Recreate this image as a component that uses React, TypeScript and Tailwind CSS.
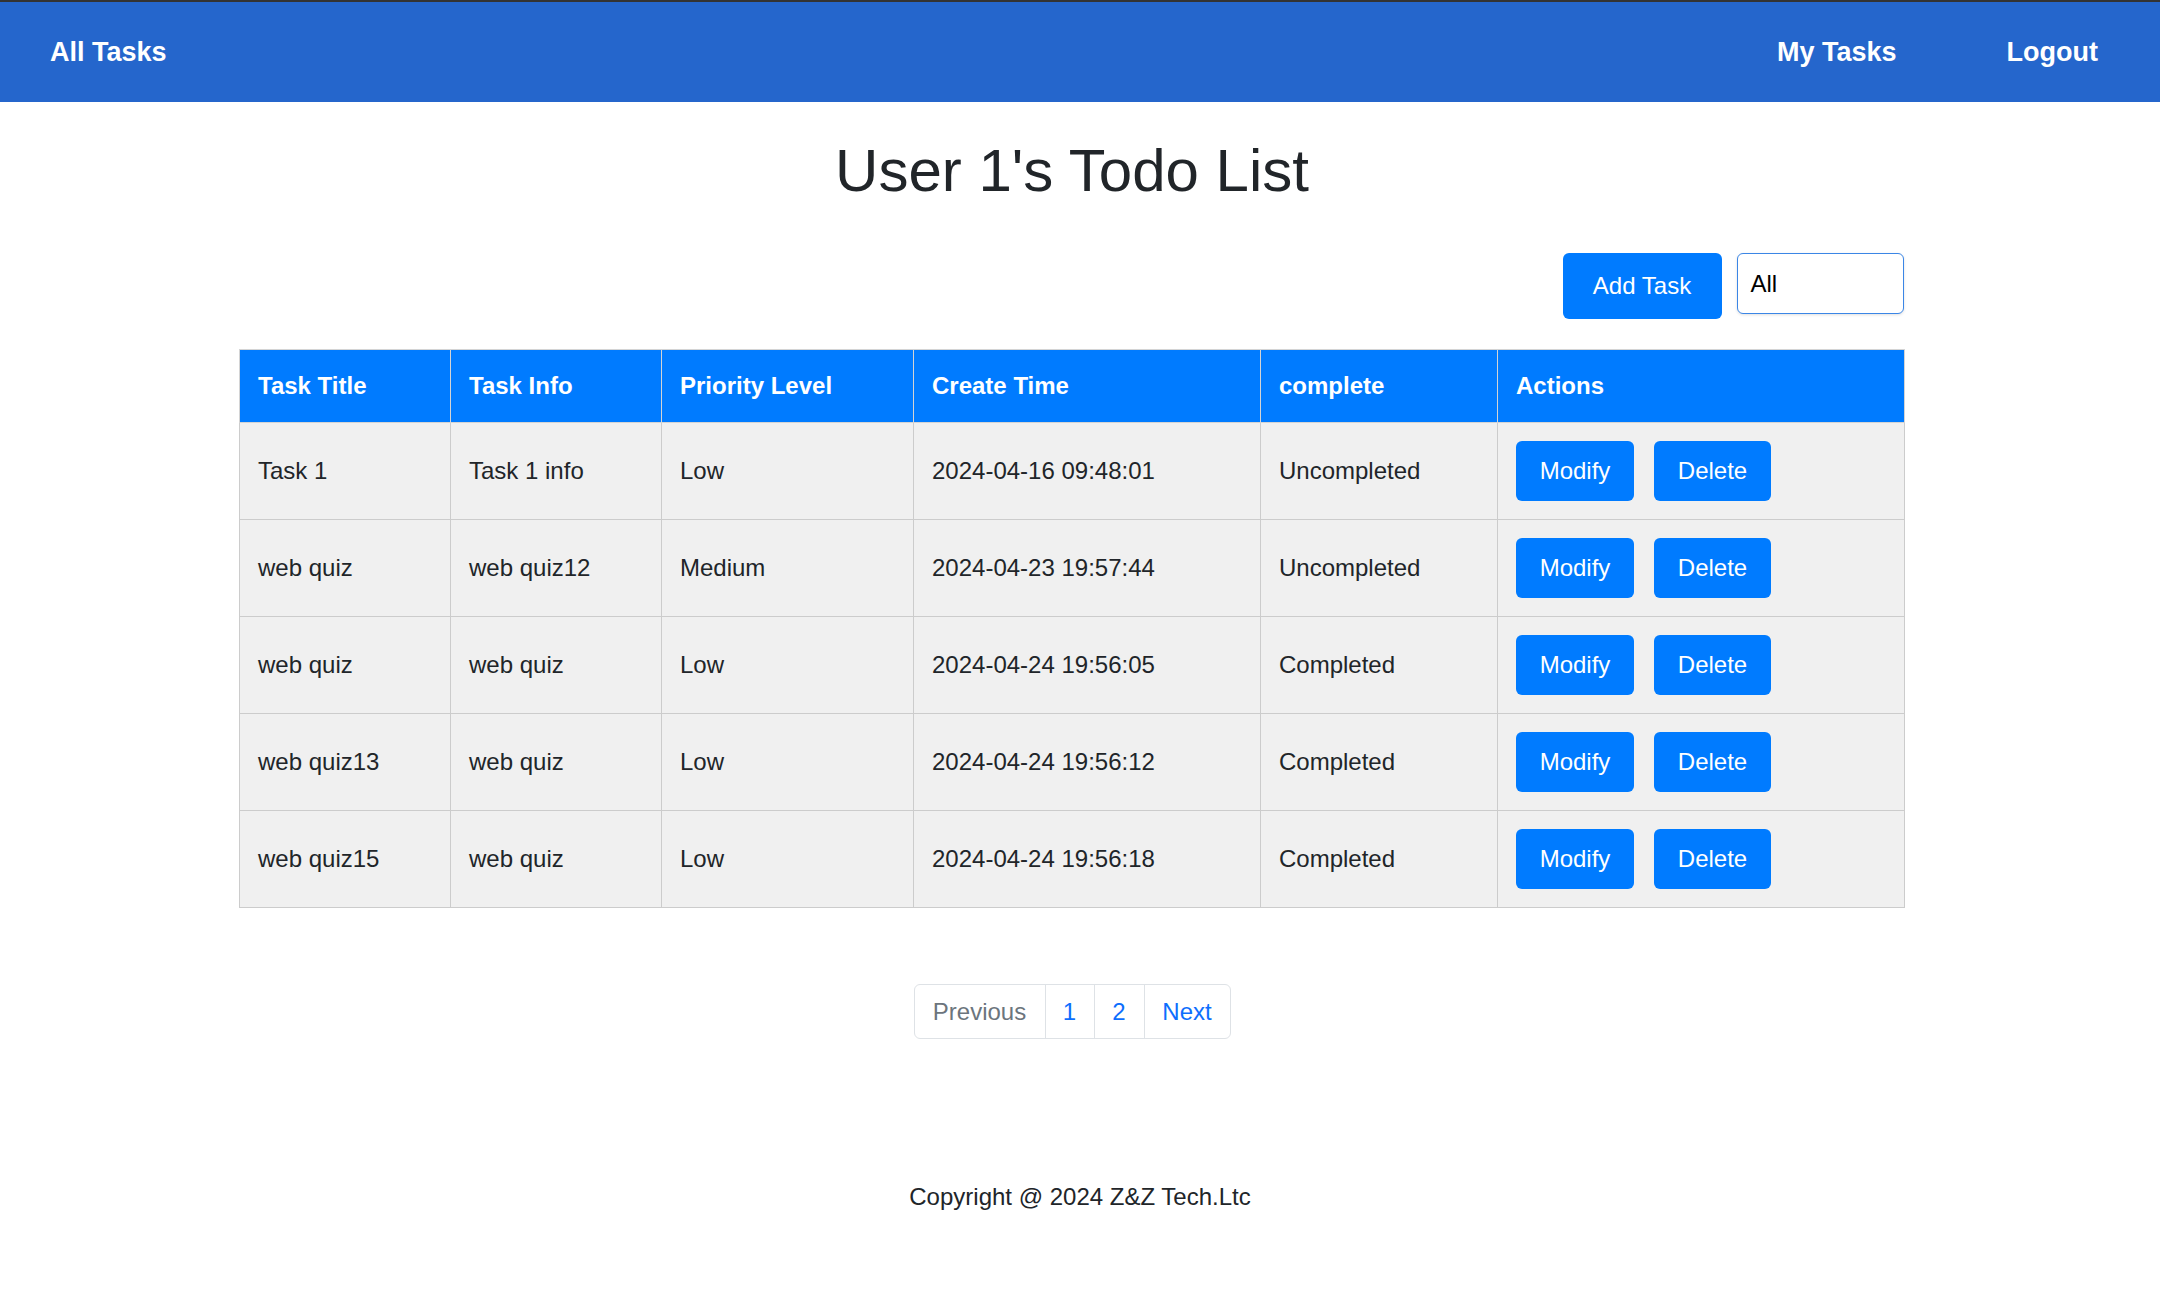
import React from "react";

const rows = [
  { title: "Task 1", info: "Task 1 info", level: "Low", time: "2024-04-16 09:48:01", done: "Uncompleted" },
  { title: "web quiz", info: "web quiz12", level: "Medium", time: "2024-04-23 19:57:44", done: "Uncompleted" },
  { title: "web quiz", info: "web quiz", level: "Low", time: "2024-04-24 19:56:05", done: "Completed" },
  { title: "web quiz13", info: "web quiz", level: "Low", time: "2024-04-24 19:56:12", done: "Completed" },
  { title: "web quiz15", info: "web quiz", level: "Low", time: "2024-04-24 19:56:18", done: "Completed" },
];

export default function App() {
  return (
    <div className="min-h-screen bg-white font-['Liberation_Sans',Arial,sans-serif] text-[#212529]">
      <nav className="flex h-[102px] items-center justify-between border-t-2 border-[#333333] bg-[#2566cc] pl-[50px] pr-[62px] text-[27px] font-bold text-white">
        <span>All Tasks</span>
        <div className="flex gap-[110px]">
          <span>My Tasks</span>
          <span>Logout</span>
        </div>
      </nav>

      <main className="flex flex-col items-center pr-[16px]">
        <h1 className="mt-[34px] text-center text-[60px] font-normal leading-[69px]">User 1's Todo List</h1>

        <div className="mt-[48px] flex w-[1665px] items-start justify-end">
          <button className="flex h-[66px] w-[159px] items-center justify-center rounded-[6px] bg-[#007bff] text-[24px] text-white">
            Add Task
          </button>
          <div className="ml-[15px] mr-[1px] flex h-[61px] w-[167px] items-center rounded-[6px] border border-[#3b86e6] bg-white pl-[13px] text-[24px] text-black shadow-[0_1px_3px_rgba(0,0,0,0.12)]">
            All
          </div>
        </div>

        <table className="mt-[30px] w-[1665px] table-fixed border-collapse text-[24px]">
          <colgroup>
            <col className="w-[211px]" />
            <col className="w-[211px]" />
            <col className="w-[252px]" />
            <col className="w-[347px]" />
            <col className="w-[237px]" />
            <col className="w-[407px]" />
          </colgroup>
          <thead>
            <tr className="h-[73px] bg-[#007bff] text-left font-bold text-white">
              {["Task Title", "Task Info", "Priority Level", "Create Time", "complete", "Actions"].map((h) => (
                <th key={h} className="border border-[#d4d4d4] pl-[18px] font-bold">
                  {h}
                </th>
              ))}
            </tr>
          </thead>
          <tbody>
            {rows.map((r, i) => (
              <tr key={i} className="h-[97px] bg-[#f0f0f0]">
                <td className="border border-[#cccccc] pl-[18px]">{r.title}</td>
                <td className="border border-[#cccccc] pl-[18px]">{r.info}</td>
                <td className="border border-[#cccccc] pl-[18px]">{r.level}</td>
                <td className="border border-[#cccccc] pl-[18px]">{r.time}</td>
                <td className="border border-[#cccccc] pl-[18px]">{r.done}</td>
                <td className="border border-[#cccccc] pl-[18px]">
                  <div className="flex gap-[20px]">
                    <button className="flex h-[60px] w-[118px] items-center justify-center rounded-[6px] bg-[#007bff] text-white">
                      Modify
                    </button>
                    <button className="flex h-[60px] w-[117px] items-center justify-center rounded-[6px] bg-[#007bff] text-white">
                      Delete
                    </button>
                  </div>
                </td>
              </tr>
            ))}
          </tbody>
        </table>

        <div className="mt-[76px] flex h-[55px] overflow-hidden rounded-[6px] border border-[#dee2e6] text-[24px]">
          <span className="flex w-[130px] items-center justify-center text-[#6c757d]">Previous</span>
          <span className="flex w-[49px] items-center justify-center border-l border-[#dee2e6] text-[#0d6efd]">1</span>
          <span className="flex w-[50px] items-center justify-center border-l border-[#dee2e6] text-[#0d6efd]">2</span>
          <span className="flex w-[86px] items-center justify-center border-l border-[#dee2e6] text-[#0d6efd]">Next</span>
        </div>
      </main>

      <footer className="mt-[141px] pb-[90px] text-center text-[24px] leading-[34px]">Copyright @ 2024 Z&amp;Z Tech.Ltc</footer>
    </div>
  );
}
